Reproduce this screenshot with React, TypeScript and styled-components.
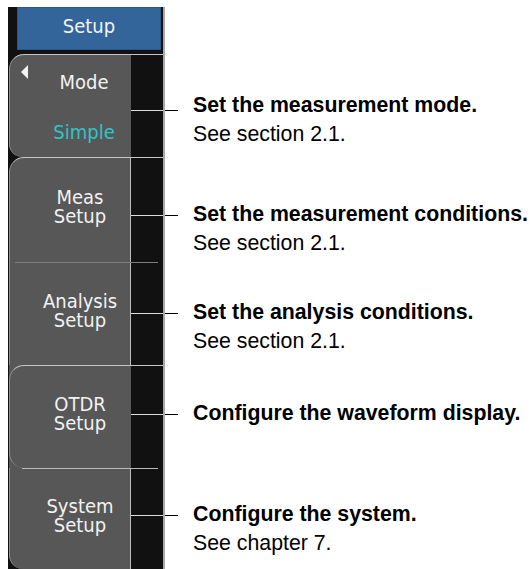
import styled, { createGlobalStyle } from 'styled-components'

const GlobalStyle = createGlobalStyle`
  html, body {
    margin: 0;
    padding: 0;
    background: #fff;
  }
  body {
    font-family: "Liberation Sans", Arial, sans-serif;
  }
`

const Page = styled.div`
  width: 531px;
  height: 569px;
  overflow: hidden;
  box-sizing: border-box;
  padding: 7px 0 0 8px;
  display: flex;
  flex-direction: column;
`

const Row = styled.div`
  display: flex;
  align-items: flex-start;
`

const Panel = styled.div<{ $head?: boolean }>`
  width: 157px;
  flex-shrink: 0;
  box-sizing: border-box;
  background: #111;
  border-right: 2px solid #a9a9a9;
  padding: ${(p) => (p.$head ? '0 2px 4px 9px' : '0 0 0 1px')};
`

const Title = styled.div`
  height: 43px;
  box-sizing: border-box;
  background: #33659a;
  border: 1px solid #2b5685;
  display: flex;
  align-items: center;
  justify-content: center;
  padding-bottom: 6px;
  color: #f4f4f4;
  font-family: "DejaVu Sans Condensed", "DejaVu Sans", sans-serif;
  font-stretch: condensed;
  font-size: 20px;
  line-height: 20px;
`

const Slot = styled.div<{ $under: string }>`
  background: ${(p) => p.$under};
`

type Line = 'edge' | 'inset' | 'faint'

const Key = styled.div<{ $h: number; $rt: number; $rb: number; $line: Line }>`
  position: relative;
  height: ${(p) => p.$h}px;
  box-sizing: border-box;
  display: flex;
  overflow: hidden;
  background: #575757;
  border-left: 1px solid #8f8f8f;
  border-top: ${(p) => (p.$line === 'edge' ? '1px solid #c6c6c6' : '0')};
  border-radius: ${(p) => `${p.$rt}px 0 0 ${p.$rb}px`};

  &::before {
    content: '';
    display: ${(p) => (p.$line === 'edge' ? 'none' : 'block')};
    position: absolute;
    z-index: 1;
    top: 0;
    height: 1px;
    left: ${(p) => (p.$line === 'inset' ? 12 : 5)}px;
    right: 5px;
    background: ${(p) => (p.$line === 'inset' ? '#b9b9b9' : '#7d7d7d')};
  }
`

const Face = styled.div<{ $sep: boolean; $indent: number; $lift: number; $gap: number }>`
  width: 121px;
  flex-shrink: 0;
  box-sizing: border-box;
  border-right: 1px solid ${(p) => (p.$sep ? '#bcbcbc' : '#575757')};
  display: flex;
  flex-direction: column;
  align-items: center;
  justify-content: center;
  gap: ${(p) => p.$gap}px;
  padding: ${(p) => (p.$lift < 0 ? -p.$lift : 0)}px 0
    ${(p) => (p.$lift > 0 ? p.$lift : 0)}px ${(p) => p.$indent}px;
  color: #f2f2f2;
  font-family: "DejaVu Sans Condensed", "DejaVu Sans", sans-serif;
  font-stretch: condensed;
  font-size: 20px;
  white-space: nowrap;
`

const Label = styled.div`
  display: block;
  height: 19px;
  line-height: 19px;
`

const Value = styled(Label)`
  color: #2ec6c6;
`

const Gap = styled.div`
  flex: 1;
  background: #111;
`

const Arrow = styled.span`
  position: absolute;
  z-index: 1;
  top: 10px;
  left: 11px;
  width: 0;
  height: 0;
  border-top: 7px solid transparent;
  border-bottom: 7px solid transparent;
  border-right: 7px solid #f4f4f4;
`

const Note = styled.div<{ $top: number }>`
  position: relative;
  margin: ${(p) => p.$top}px 0 0 28px;
  color: #000;
  font-size: 21.3px;
  line-height: 29px;
  white-space: nowrap;
`

const Lead = styled.div`
  font-weight: 700;
`

const Ref = styled.div`
  font-weight: 400;
`

const Leader = styled.span<{ $at: number }>`
  position: absolute;
  left: -62px;
  top: ${(p) => p.$at}px;
  width: 47px;
  height: 1px;
  background: linear-gradient(
    to right,
    #dcdcdc 0 32px,
    transparent 32px 34px,
    #000 34px
  );
`

type SoftKey = {
  lines: string[]
  value?: string
  h: number
  rt: number
  rb: number
  line: Line
  under: string
  sep: boolean
  lead: string
  ref?: string
  top: number
  at: number
}

const keys: SoftKey[] = [
  { lines: ['Mode'], value: 'Simple', h: 103, rt: 15, rb: 13, line: 'edge', under: '#111', sep: false, lead: 'Set the measurement mode.', ref: 'See section 2.1.', top: 37, at: 19 },
  { lines: ['Meas', 'Setup'], h: 105, rt: 15, rb: 0, line: 'edge', under: '#111', sep: true, lead: 'Set the measurement conditions.', ref: 'See section 2.1.', top: 43, at: 15 },
  { lines: ['Analysis', 'Setup'], h: 103, rt: 0, rb: 0, line: 'faint', under: '#111', sep: true, lead: 'Set the analysis conditions.', ref: 'See section 2.1.', top: 36, at: 15 },
  { lines: ['OTDR', 'Setup'], h: 103, rt: 15, rb: 15, line: 'edge', under: '#575757', sep: false, lead: 'Configure the waveform display.', top: 34, at: 15 },
  { lines: ['System', 'Setup'], h: 101, rt: 0, rb: 14, line: 'inset', under: '#111', sep: true, lead: 'Configure the system.', ref: 'See chapter 7.', top: 32, at: 15 },
]

export default function App() {
  return (
    <>
      <GlobalStyle />
      <Page>
        <Row>
          <Panel $head>
            <Title>Setup</Title>
          </Panel>
        </Row>
        {keys.map((k) => (
          <Row key={k.lead}>
            <Panel>
              <Slot $under={k.under}>
                <Key $h={k.h} $rt={k.rt} $rb={k.rb} $line={k.line}>
                  {k.value && <Arrow />}
                  <Face
                    $sep={k.sep}
                    $indent={k.value ? 28 : 20}
                    $lift={k.value ? -3 : 6}
                    $gap={k.value ? 31 : 0}
                  >
                    {k.lines.map((t) => (
                      <Label key={t}>{t}</Label>
                    ))}
                    {k.value && <Value>{k.value}</Value>}
                  </Face>
                  <Gap />
                </Key>
              </Slot>
            </Panel>
            <Note $top={k.top}>
              <Leader $at={k.at} />
              <Lead>{k.lead}</Lead>
              {k.ref && <Ref>{k.ref}</Ref>}
            </Note>
          </Row>
        ))}
      </Page>
    </>
  )
}
